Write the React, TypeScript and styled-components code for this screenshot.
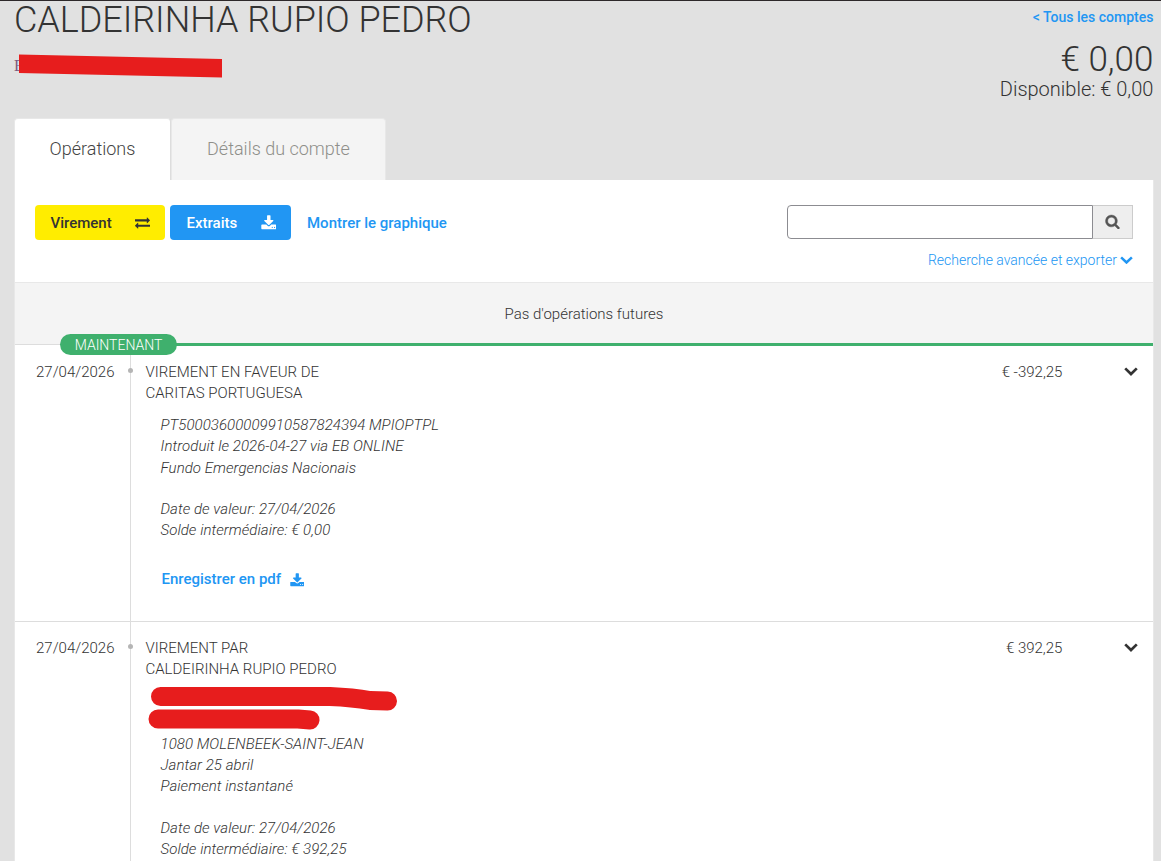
import React from "react";
import styled, { createGlobalStyle } from "styled-components";

const GlobalStyle = createGlobalStyle`
  * {
    box-sizing: border-box;
  }
  body {
    margin: 0;
    background: #e1e1e1;
    color: #333;
    font-family: Roboto, "Liberation Sans", sans-serif;
    font-size: 15px;
    font-weight: 300;
    line-height: 21.4px;
  }
`;

const Page = styled.div`
  height: 861px;
  overflow: hidden;
  border-top: 1px solid #2d282a;
  padding: 0 7px 0 14px;
`;

const Header = styled.header`
  display: flex;
  justify-content: space-between;
  height: 117px;
`;

const AccountName = styled.h1`
  margin: 0;
  font-size: 36px;
  font-weight: 300;
  letter-spacing: -0.04px;
  line-height: 38px;
`;

const AccountNumber = styled.div`
  position: relative;
  margin-top: 17px;
  font-family: "Liberation Serif", serif;
  font-size: 16px;
  line-height: 20px;
  color: #7a5a80;
`;

const Marker = styled.svg<{ $left: number; $top: number }>`
  position: absolute;
  left: ${(props) => props.$left}px;
  top: ${(props) => props.$top}px;
  overflow: visible;
`;

const Balance = styled.div`
  display: flex;
  flex-direction: column;
  align-items: flex-end;
  padding: 6px 0.6px 0 0;
`;

const TextLink = styled.a<{ $light?: boolean }>`
  display: inline-flex;
  align-items: center;
  color: #2196f3;
  font-weight: ${(props) => (props.$light ? 300 : 500)};
  text-decoration: none;
  white-space: nowrap;
`;

const BackLink = styled(TextLink)`
  font-size: 14px;
`;

const Total = styled.div`
  margin-top: 13px;
  font-size: 35px;
  line-height: 38px;
`;

const Available = styled.div`
  margin-top: -1px;
  font-size: 20px;
  line-height: 22px;
`;

const Tabs = styled.nav`
  display: flex;
  height: 62px;
`;

const Tab = styled.button<{ $active?: boolean }>`
  width: ${(props) => (props.$active ? 157 : 215)}px;
  height: 62px;
  border: 1px solid #e8e8e8;
  border-bottom: 0;
  border-right-color: ${(props) => (props.$active ? "#ddd" : "#e8e8e8")};
  border-radius: 4px 4px 0 0;
  background: ${(props) => (props.$active ? "#fff" : "#f4f4f4")};
  color: ${(props) => (props.$active ? "#444" : "#8f8f8a")};
  font: 300 18px Roboto, sans-serif;
  padding: 0 0 3px;
`;

const Panel = styled.main`
  height: 800px;
  border: 1px solid #e8e8e8;
  border-top: 0;
  background: #fff;
`;

const Toolbar = styled.div`
  display: flex;
  align-items: flex-start;
  height: 102px;
  padding: 25px 20px 0 20px;
`;

const Button = styled.button<{ $primary?: boolean }>`
  display: flex;
  align-items: center;
  justify-content: space-between;
  width: ${(props) => (props.$primary ? 121 : 130)}px;
  height: 35px;
  margin-right: 5px;
  padding: 0 15px 0 ${(props) => (props.$primary ? 16.5 : 15.5)}px;
  border: 0;
  border-radius: 4px;
  background: ${(props) => (props.$primary ? "#2196f3" : "#ffed00")};
  color: ${(props) => (props.$primary ? "#fff" : "#333")};
  font: 500 15px Roboto, sans-serif;
`;

const ChartLink = styled(TextLink)`
  height: 37px;
  margin-left: 11px;
`;

const Search = styled.div`
  display: flex;
  flex-direction: column;
  align-items: flex-end;
  gap: 11px;
  margin-left: auto;
`;

const SearchField = styled.div`
  display: flex;
`;

const Input = styled.input`
  width: 306px;
  height: 34px;
  border: 1px solid #8c8c91;
  border-radius: 4px 0 0 4px;
  padding: 0 10px;
`;

const SearchButton = styled.button`
  display: flex;
  align-items: center;
  justify-content: center;
  width: 40px;
  height: 34px;
  border: 1px solid #ccc;
  border-left: 0;
  background: #eee;
  color: #555;
  padding: 0 0 2px;
`;

const AdvancedLink = styled(TextLink)`
  gap: 3px;
  font-size: 14px;

  svg {
    margin-bottom: 2px;
  }
`;

const Future = styled.div`
  display: flex;
  align-items: center;
  justify-content: center;
  height: 61px;
  padding-top: 3px;
  border-top: 1px solid #e8e8e8;
  background: #f4f4f4;
`;

const NowLine = styled.div`
  position: relative;
  z-index: 1;
  height: 3px;
  background: linear-gradient(#f4f4f4 1px, #ddd 1px 2px, #fff 2px) 0 0 / 60px
      3px no-repeat,
    #3fb06d;
`;

const NowBadge = styled.span`
  position: absolute;
  left: 45px;
  top: -9px;
  width: 117px;
  height: 21px;
  border-radius: 11px;
  background: #3fb06d;
  color: #fff;
  font-size: 14px;
  line-height: 22px;
  text-align: center;
`;

const Row = styled.article`
  display: grid;
  grid-template-columns: 115px 1fr auto 90.6px;
  height: 276px;
  border-bottom: 1px solid #ddd;
`;

const RowDate = styled.time`
  padding: 16px 0 0 21px;
`;

const Operation = styled.div`
  position: relative;
  padding: 16px 0 0 14.5px;
  border-left: 1px solid #ddd;

  &::before {
    content: "";
    position: absolute;
    left: -3px;
    top: 22px;
    width: 5px;
    height: 5px;
    border-radius: 50%;
    background: #b5b5b5;
  }
`;

const Details = styled.div`
  position: relative;
  padding: 10px 0 0 15px;
  font-style: italic;
  letter-spacing: 0.06px;
`;

const ValueDate = styled.div`
  margin-top: 20px;
`;

const PdfLink = styled(TextLink)`
  gap: 8.5px;
  margin: 27px 0 0 16px;
`;

const Amount = styled.div`
  padding-top: 16px;
`;

const Toggle = styled.button`
  align-self: start;
  justify-self: end;
  display: flex;
  margin: 21px 15px 0 0;
  padding: 0;
  border: 0;
  background: none;
  color: #333;
`;

const icons = {
  exchange:
    "M1792 1184v192q0 13-9.5 22.5t-22.5 9.5h-1376v192q0 13-9.5 22.5t-22.5 9.5q-12 0-24-10l-319-320q-9-9-9-22 0-14 9-23l320-320q9-9 23-9 13 0 22.5 9.5t9.5 22.5v192h1376q13 0 22.5 9.5t9.5 22.5zm0-544q0 14-9 23l-320 320q-9 9-23 9-13 0-22.5-9.5t-9.5-22.5v-192h-1376q-13 0-22.5-9.5t-9.5-22.5v-192q0-13 9.5-22.5t22.5-9.5h1376v-192q0-14 9-23t23-9q12 0 24 10l319 319q9 9 9 23z",
  download:
    "M1344 1344q0-26-19-45t-45-19-45 19-19 45 19 45 45 19 45-19 19-45zm256 0q0-26-19-45t-45-19-45 19-19 45 19 45 45 19 45-19 19-45zm128-224v320q0 40-28 68t-68 28h-1472q-40 0-68-28t-28-68v-320q0-40 28-68t68-28h465l135 136q58 56 136 56t136-56l136-136h464q40 0 68 28t28 68zm-325-569q17 41-14 70l-448 448q-18 19-45 19t-45-19l-448-448q-31-29-14-70 17-39 59-39h256v-448q0-26 19-45t45-19h256q26 0 45 19t19 45v448h256q42 0 59 39z",
  search:
    "M1216 832q0-185-131.5-316.5t-316.5-131.5-316.5 131.5-131.5 316.5 131.5 316.5 316.5 131.5 316.5-131.5 131.5-316.5zm512 832q0 52-38 90t-90 38q-54 0-90-38l-343-342q-179 124-399 124-143 0-273.5-55.5t-225-150-150-225-55.5-273.5 55.5-273.5 150-225 225-150 273.5-55.5 273.5 55.5 225 150 150 225 55.5 273.5q0 220-124 399l343 343q37 37 37 90z",
};

// the download glyph fills less of its em box than the others
const viewBoxes = {
  exchange: "0 0 1792 1792",
  download: "32 -32 1664 1664",
  search: "0 0 1792 1792",
};

type TIcon = { name: keyof typeof icons; size?: number };

const Icon = ({ name, size = 15 }: TIcon) => (
  <svg
    width={size}
    height={size}
    viewBox={viewBoxes[name]}
    fill="currentColor"
    stroke="currentColor"
    strokeWidth={name === "search" ? 50 : 0}
  >
    <path d={icons[name]} />
  </svg>
);

const Chevron = ({ width = 14 }: { width?: number }) => (
  <svg
    width={width}
    height={(width * 9) / 14}
    viewBox="0 0 14 9"
    fill="none"
    stroke="currentColor"
    strokeWidth="2.7"
  >
    <path d="M1.2 1.4L7 7l5.8-5.6" />
  </svg>
);

type TOperation = {
  key: number;
  date: string;
  title: string[];
  amount: string;
  details: string[];
  balance: string;
  masked?: boolean;
};

const operations: TOperation[] = [
  {
    key: 1,
    date: "27/04/2026",
    title: ["VIREMENT EN FAVEUR DE", "CARITAS PORTUGUESA"],
    amount: "€ -392,25",
    details: [
      "PT50003600009910587824394 MPIOPTPL",
      "Introduit le 2026-04-27 via EB ONLINE",
      "Fundo Emergencias Nacionais",
    ],
    balance: "€ 0,00",
  },
  {
    key: 2,
    date: "27/04/2026",
    title: ["VIREMENT PAR", "CALDEIRINHA RUPIO PEDRO"],
    amount: "€ 392,25",
    // the first two lines are hidden behind the marker
    details: [
      "\u00a0",
      "\u00a0",
      "1080 MOLENBEEK-SAINT-JEAN",
      "Jantar 25 abril",
      "Paiement instantané",
    ],
    balance: "€ 392,25",
    masked: true,
  },
];

const OperationRow = ({ operation }: { operation: TOperation }) => {
  const { date, title, amount, details, balance, masked } = operation;

  return (
    <Row>
      <RowDate>{date}</RowDate>
      <Operation>
        {title.map((line) => (
          <div key={line}>{line}</div>
        ))}
        <Details>
          {details.map((line, index) => (
            <div key={index}>{line}</div>
          ))}
          {masked && (
            <Marker
              $left={2.5}
              $top={6.5}
              width="248"
              height="44"
              fill="none"
              stroke="#e71d1d"
              strokeWidth="19"
              strokeLinecap="round"
              strokeLinejoin="round"
            >
              <path d="M12.5 9.5H182Q205 10.5 222 13.5L239.5 14" />
              <path d="M10 32H150L162 33" />
            </Marker>
          )}
          <ValueDate>Date de valeur: {date}</ValueDate>
          <div>Solde intermédiaire: {balance}</div>
        </Details>
        <PdfLink>
          Enregistrer en pdf
          <Icon name="download" size={14} />
        </PdfLink>
      </Operation>
      <Amount>{amount}</Amount>
      <Toggle type="button">
        <Chevron />
      </Toggle>
    </Row>
  );
};

const App = () => {
  return (
    <>
      <GlobalStyle />
      <Page>
        <Header>
          <div>
            <AccountName>CALDEIRINHA RUPIO PEDRO</AccountName>
            <AccountNumber>
              E
              <Marker $left={5} $top={-2} width="203" height="24">
                <path d="M0 0.5L203 5V23.5L0 19Z" fill="#e71d1d" />
              </Marker>
            </AccountNumber>
          </div>
          <Balance>
            <BackLink>&lt; Tous les comptes</BackLink>
            <Total>€ 0,00</Total>
            <Available>Disponible: € 0,00</Available>
          </Balance>
        </Header>
        <Tabs>
          <Tab $active type="button">
            Opérations
          </Tab>
          <Tab type="button">Détails du compte</Tab>
        </Tabs>
        <Panel>
          <Toolbar>
            <Button type="button">
              Virement
              <Icon name="exchange" />
            </Button>
            <Button $primary type="button">
              Extraits
              <Icon name="download" />
            </Button>
            <ChartLink>Montrer le graphique</ChartLink>
            <Search>
              <SearchField>
                <Input />
                <SearchButton type="button">
                  <Icon name="search" />
                </SearchButton>
              </SearchField>
              <AdvancedLink $light>
                Recherche avancée et exporter
                <Chevron width={13} />
              </AdvancedLink>
            </Search>
          </Toolbar>
          <Future>Pas d'opérations futures</Future>
          <NowLine>
            <NowBadge>MAINTENANT</NowBadge>
          </NowLine>
          {operations.map((operation) => (
            <OperationRow key={operation.key} operation={operation} />
          ))}
        </Panel>
      </Page>
    </>
  );
};

export default App;
